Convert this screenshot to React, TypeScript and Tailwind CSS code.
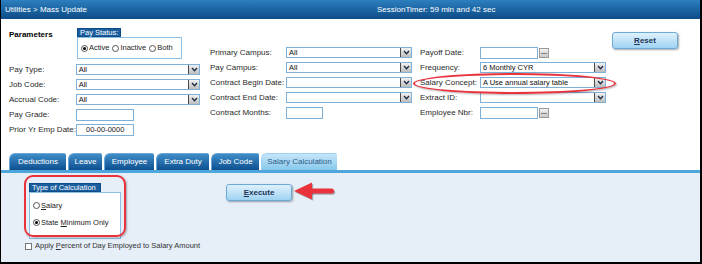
import React from "react";

const font = "font-['Liberation_Sans',Arial,sans-serif]";

function Chevron() {
  return (
    <span className="flex w-[11px] items-center justify-center border-l border-[#4a4a4a] bg-linear-to-b from-[#f2f2f2] to-[#bdbdbd]">
      <svg viewBox="0 0 8 6" width="7" height="5" aria-hidden>
        <path d="M1 1.2L4 4.4L7 1.2" fill="none" stroke="#1c2a44" strokeWidth="1.6" />
      </svg>
    </span>
  );
}

function Select({ value = "", className }: { value?: string; className: string }) {
  return (
    <div className={`flex h-[11px] items-stretch border border-[#7eb1d9] bg-white ${className}`}>
      <span className="flex-1 truncate pl-[2px] text-[7.5px] leading-[9px] text-[#111]">{value}</span>
      <Chevron />
    </div>
  );
}

function Input({ value = "", className }: { value?: string; className: string }) {
  return (
    <div className={`h-[12px] border border-[#7eb1d9] bg-white text-[7.5px] leading-[10px] text-[#222] ${className}`}>
      {value}
    </div>
  );
}

function Dots() {
  return (
    <span className="ml-[1px] flex h-[10px] w-[10px] items-start justify-center border border-[#9a9a9a] bg-linear-to-b from-[#f4f4f4] to-[#c9c9c9] text-[7px] font-bold leading-[5px] text-[#333]">
      ...
    </span>
  );
}

function Radio({ checked }: { checked?: boolean }) {
  return (
    <span className="flex h-[7px] w-[7px] items-center justify-center rounded-full border border-[#555] bg-white">
      {checked ? <span className="h-[3px] w-[3px] rounded-full bg-black" /> : null}
    </span>
  );
}

function Row({ label, labelW, children }: { label: string; labelW: string; children: React.ReactNode }) {
  return (
    <div className="flex h-[15px] items-center">
      <span className={`${labelW} text-[8px] text-[#2a2a2a]`}>{label}</span>
      {children}
    </div>
  );
}

function Button({ accel, rest, className }: { accel: string; rest: string; className: string }) {
  return (
    <div
      className={`flex items-center justify-center rounded-[3px] border border-[#6aa8d6] bg-linear-to-b from-[#dff1fc] to-[#9fd3f2] text-[8px] font-bold text-[#1d3557] shadow-[1px_1px_2px_rgba(0,0,0,0.35)] ${className}`}
    >
      <span>
        <span className="underline">{accel}</span>
        {rest}
      </span>
    </div>
  );
}

const TABS = [
  { label: "Deductions", w: "w-[57px]" },
  { label: "Leave", w: "w-[34px]" },
  { label: "Employee", w: "w-[50px]" },
  { label: "Extra Duty", w: "w-[53px]" },
  { label: "Job Code", w: "w-[48px]" },
];

export default function App() {
  return (
    <div className={`${font} relative h-[264px] w-[702px] overflow-hidden border-l border-r-2 border-b-2 border-black bg-white`}>
      {/* title bar */}
      <div className="flex h-[19px] items-center bg-linear-to-b from-[#2c7fbf] to-[#0c4c87] pl-[4px] text-[8px] text-white">
        <span className="w-[372px]">Utilities &gt; Mass Update</span>
        <span>SessionTimer: 59 min and 42 sec</span>
      </div>

      {/* parameters */}
      <div className="flex h-[134px] pl-[8px]">
        <div className="w-[191px] pt-[9px]">
          <div className="flex">
            <span className="w-[68px] pt-[1px] text-[8px] font-bold text-black">Parameters</span>
            <div>
              <div className="flex h-[9px] w-[44px] items-center border border-[#0c4c87] bg-[#1b5e9e] pl-[2px] text-[7.5px] text-white">
                Pay Status:
              </div>
              <div className="flex h-[22px] w-[105px] items-center gap-[1px] border border-[#8cc0e6] pl-[3px] text-[7.5px] text-[#222]">
                <Radio checked />
                <span className="mr-[2px]">Active</span>
                <Radio />
                <span className="mr-[2px]">Inactive</span>
                <Radio />
                <span>Both</span>
              </div>
            </div>
          </div>
          <div className="mt-[3px]">
            <Row label="Pay Type:" labelW="w-[67px]">
              <Select value="All" className="w-[125px]" />
            </Row>
            <Row label="Job Code:" labelW="w-[67px]">
              <Select value="All" className="w-[125px]" />
            </Row>
            <Row label="Accrual Code:" labelW="w-[67px]">
              <Select value="All" className="w-[125px]" />
            </Row>
            <Row label="Pay Grade:" labelW="w-[67px]">
              <Input className="w-[58px]" />
            </Row>
            <Row label="Prior Yr Emp Date:" labelW="w-[67px]">
              <Input value="00-00-0000" className="w-[58px] pl-[9px]" />
            </Row>
          </div>
        </div>

        <div className="ml-[10px] pt-[26px]">
          <Row label="Primary Campus:" labelW="w-[76px]">
            <Select value="All" className="w-[126px]" />
          </Row>
          <Row label="Pay Campus:" labelW="w-[76px]">
            <Select value="All" className="w-[126px]" />
          </Row>
          <Row label="Contract Begin Date:" labelW="w-[76px]">
            <Select className="w-[126px]" />
          </Row>
          <Row label="Contract End Date:" labelW="w-[76px]">
            <Select className="w-[126px]" />
          </Row>
          <Row label="Contract Months:" labelW="w-[76px]">
            <Input className="w-[37px]" />
          </Row>
        </div>

        <div className="ml-[8px] pt-[26px]">
          <Row label="Payoff Date:" labelW="w-[60px]">
            <Input className="w-[58px]" />
            <Dots />
          </Row>
          <Row label="Frequency:" labelW="w-[60px]">
            <Select value="6 Monthly CYR" className="w-[126px]" />
          </Row>
          <Row label="Salary Concept:" labelW="w-[60px]">
            <Select value="A Use annual salary table" className="w-[126px]" />
          </Row>
          <Row label="Extract ID:" labelW="w-[60px]">
            <Select className="w-[126px]" />
          </Row>
          <Row label="Employee Nbr:" labelW="w-[60px]">
            <Input className="w-[58px]" />
            <Dots />
          </Row>
        </div>

        <div className="ml-[6px] pt-[13px]">
          <Button accel="R" rest="eset" className="h-[17px] w-[66px]" />
        </div>
      </div>

      {/* tabs */}
      <div className="flex h-[17px] items-end gap-[2px] pl-[8px]">
        {TABS.map((t) => (
          <div
            key={t.label}
            className={`flex h-[17px] ${t.w} items-center justify-center rounded-tl-[6px] rounded-tr-[2px] border-t border-l border-[#6aa6d6] bg-linear-to-b from-[#3f8dc8] to-[#0d5090] text-[8px] text-white`}
          >
            {t.label}
          </div>
        ))}
        <div className="flex h-[17px] w-[76px] items-center justify-center rounded-tl-[6px] rounded-tr-[2px] border-t border-l border-[#9ed1f0] bg-linear-to-b from-[#c6e6f8] to-[#86c7ec] text-[8px] text-[#2a5b86]">
          Salary Calculation
        </div>
      </div>
      <div className="h-[3px] bg-[#4fa6da]" />

      {/* panel */}
      <div className="h-[89px] bg-[#e6eef8] pl-[28px] pt-[10px]">
        <div className="flex">
          <div>
            <div className="flex h-[9px] w-[72px] items-center border border-[#0c4c87] bg-[#1b5e9e] pl-[2px] text-[7.5px] text-white">
              Type of Calculation
            </div>
            <div className="h-[47px] w-[92px] border border-[#8cc0e6] bg-white pl-[3px] pt-[8px] text-[7.5px] text-[#222]">
              <div className="flex h-[9px] items-center gap-[1px]">
                <Radio />
                <span>
                  <span className="underline">S</span>alary
                </span>
              </div>
              <div className="mt-[8px] flex h-[9px] items-center gap-[1px]">
                <Radio checked />
                <span>
                  State <span className="underline">M</span>inimum Only
                </span>
              </div>
            </div>
          </div>
          <div className="ml-[105px] pt-[1px]">
            <Button accel="E" rest="xecute" className="h-[17px] w-[66px]" />
          </div>
        </div>
        <div className="-ml-[4px] mt-[3px] flex h-[8px] items-center gap-[3px] text-[7.5px] text-[#333]">
          <span className="h-[7px] w-[7px] border border-[#777] bg-white" />
          <span>
            Apply <span className="underline">P</span>ercent of Day Employed to Salary Amount
          </span>
        </div>
      </div>

      {/* annotations */}
      <div className="pointer-events-none absolute left-[412px] top-[73px] h-[21px] w-[203px] rounded-[50%] border-2 border-[#e8323c] shadow-[1px_1px_2px_rgba(0,0,0,0.3)]" />
      <div className="pointer-events-none absolute left-[23px] top-[175px] h-[62px] w-[102px] rounded-[9px] border-2 border-[#e8323c] shadow-[1px_1px_2px_rgba(0,0,0,0.3)]" />
      <svg className="pointer-events-none absolute left-[290px] top-[180px]" width="48" height="24" viewBox="0 0 48 24" aria-hidden>
        <g transform="translate(1.2 1.2)" fill="rgba(0,0,0,0.3)">
          <polygon points="3,11 21,2.5 21,19.5" />
          <rect x="17" y="8.5" width="26" height="5" rx="2.5" />
        </g>
        <g fill="#e8323c">
          <polygon points="3,11 21,2.5 21,19.5" />
          <rect x="17" y="8.5" width="26" height="5" rx="2.5" />
        </g>
      </svg>
    </div>
  );
}
